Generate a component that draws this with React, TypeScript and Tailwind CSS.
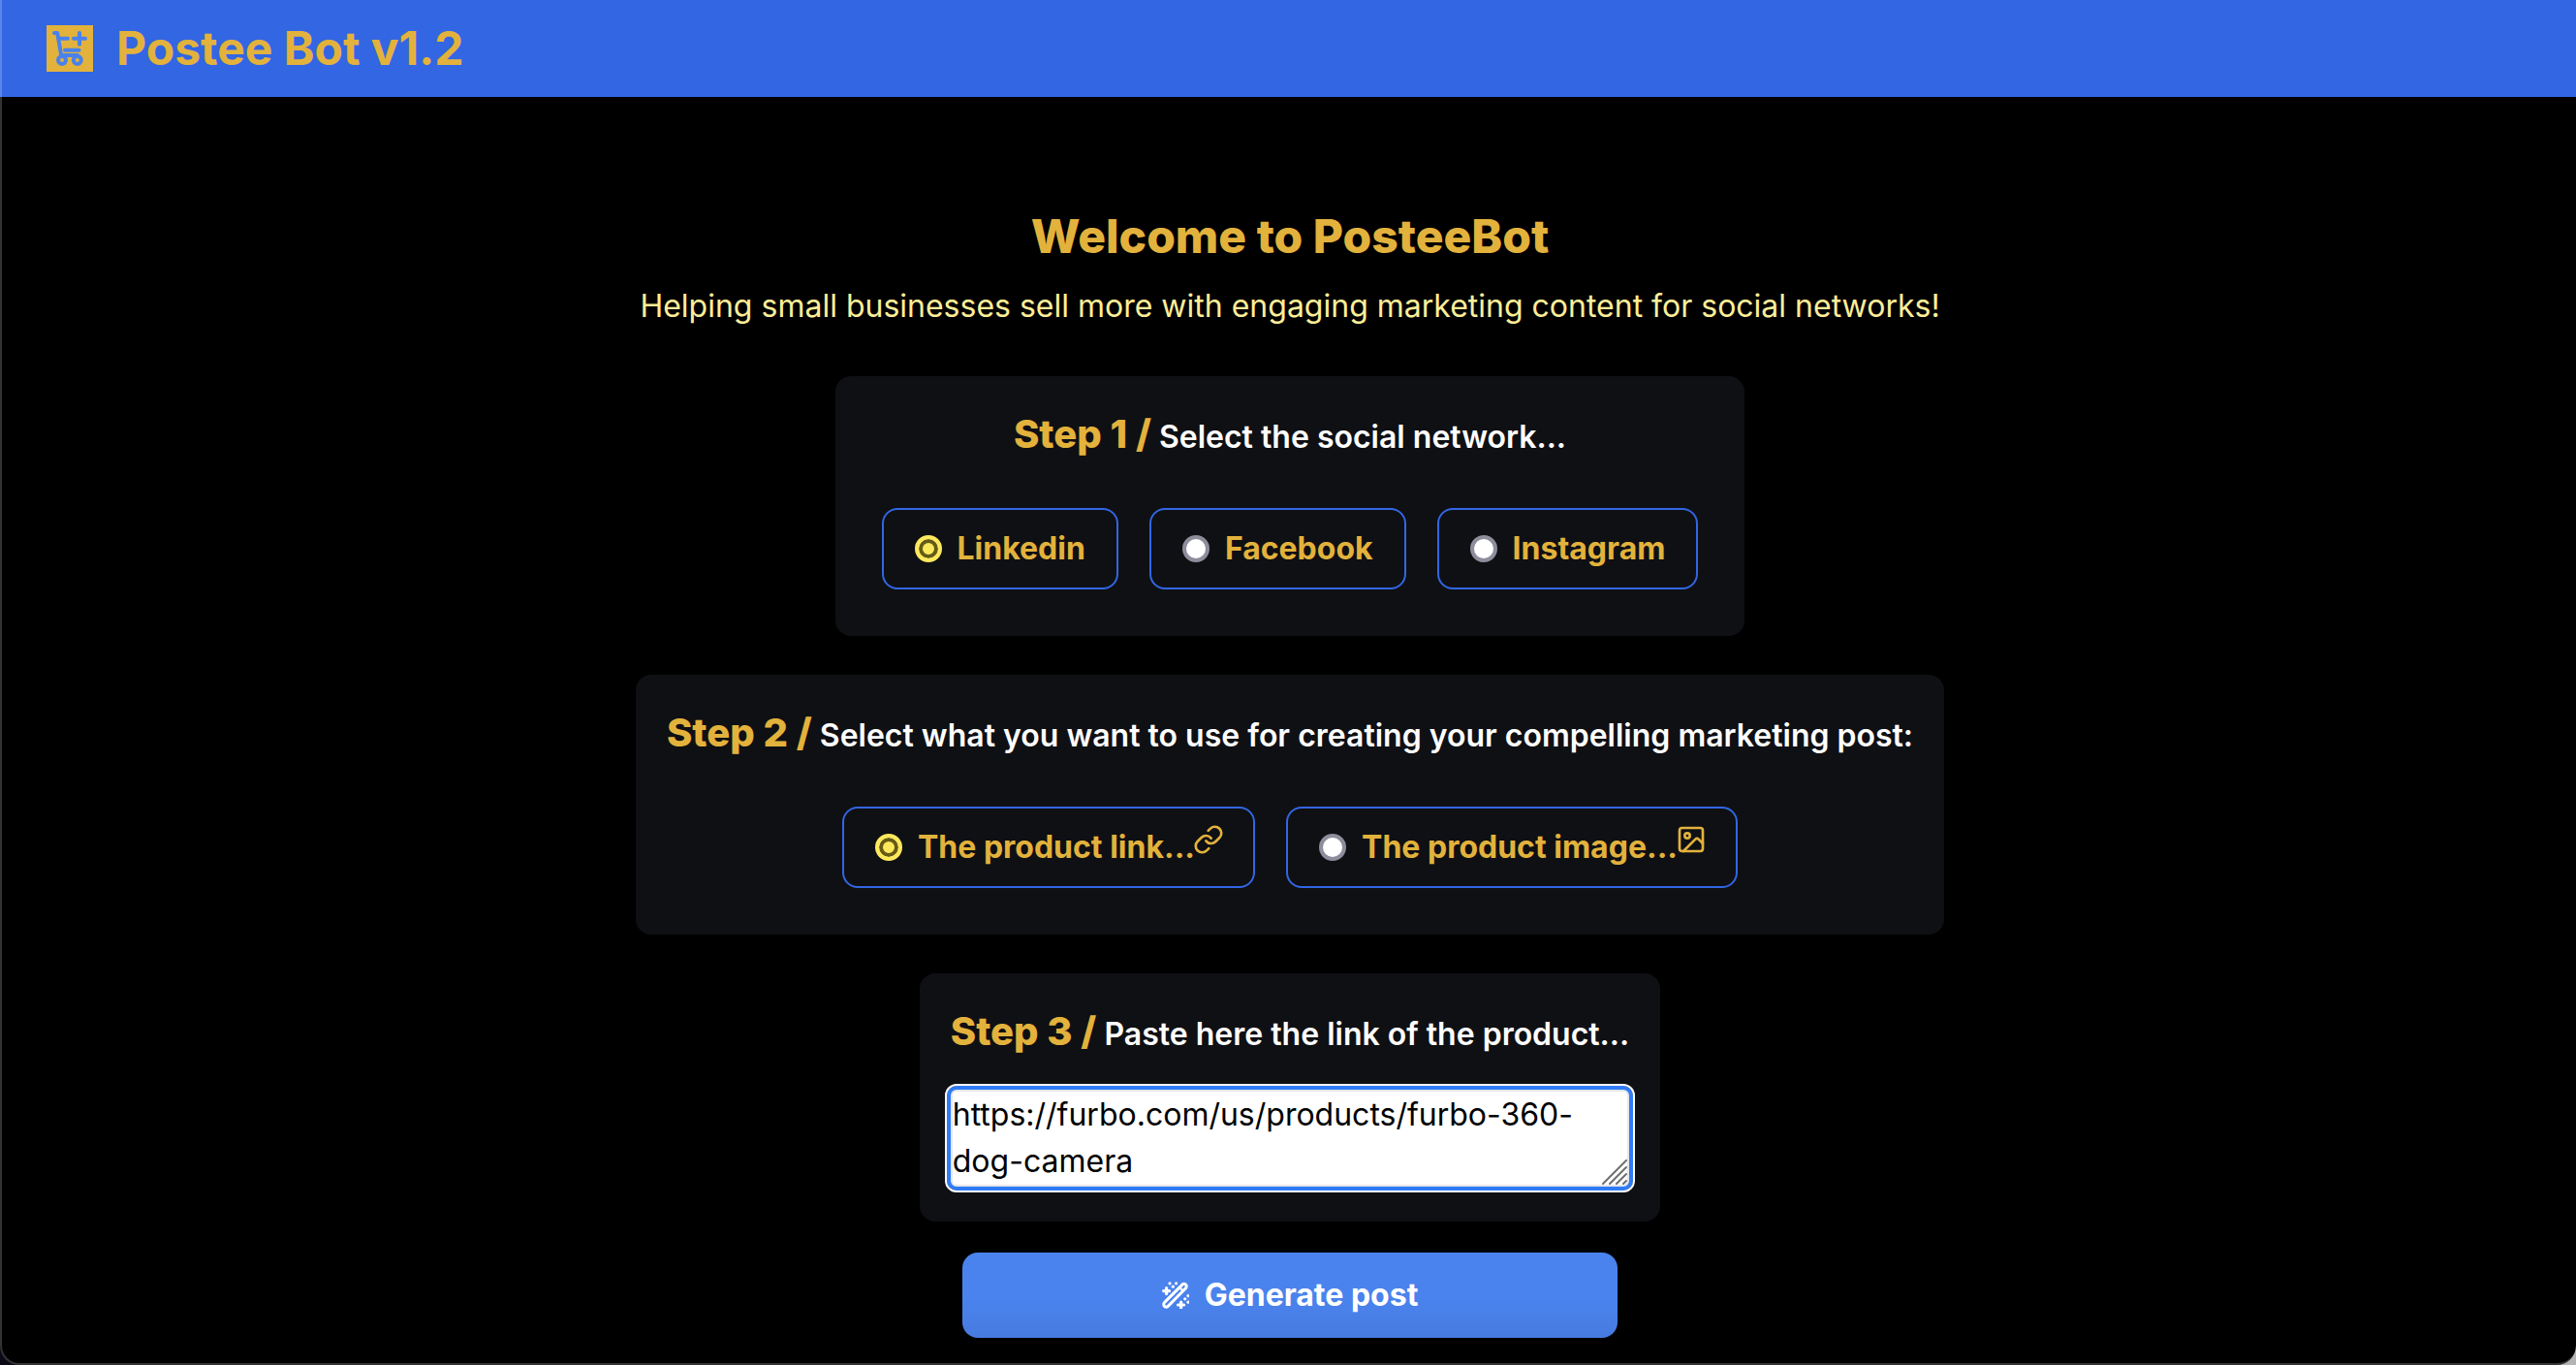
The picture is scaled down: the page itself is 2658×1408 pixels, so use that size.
import { useState } from "react";
import type { ReactNode } from "react";
import { Image, Link } from "lucide-react";

function CartPlusLogo() {
  return (
    <svg viewBox="0 0 48 48" className="size-12 shrink-0 bg-[#e2b23c]" fill="none" stroke="#4a82ec" strokeWidth="4" strokeLinecap="round" strokeLinejoin="round" aria-hidden="true">
      <path d="M8 8h3.2L15.2 31H32" />
      <path d="M12.5 13.7h9.3" />
      <path d="M19 25.7h14.5" />
      <path d="M34 8v11.8M28 13.7h12" />
      <circle cx="16" cy="36" r="4" />
      <circle cx="31.8" cy="36" r="4" />
    </svg>
  );
}

function WandIcon() {
  return (
    <svg viewBox="0 0 28 28" className="size-7 shrink-0" fill="none" stroke="currentColor" aria-hidden="true">
      <path d="M2.6 21.4 20.9 3.1a2.5 2.5 0 0 1 3.6 0 2.5 2.5 0 0 1 0 3.6L6.2 25.4a2.5 2.5 0 0 1-3.6 0 2.8 2.8 0 0 1 0-4Z" strokeWidth="3" />
      <path d="m18.3 6.2 3.6 3.6" strokeWidth="2.4" />
      <path d="M4.6 6.6v6M1.6 9.6h6M19.6 21v6M16.6 24h6" strokeWidth="3.2" strokeLinecap="round" />
      <g fill="currentColor" stroke="none">
        <circle cx="8" cy="1.8" r="1.6" />
        <circle cx="14.6" cy="1.8" r="1.6" />
        <circle cx="11.3" cy="5.2" r="1.6" />
        <circle cx="27" cy="14.6" r="1.6" />
        <circle cx="23.8" cy="17.8" r="1.6" />
        <circle cx="27" cy="21.2" r="1.6" />
      </g>
    </svg>
  );
}

function ResizeGrip() {
  return (
    <svg viewBox="0 0 28 28" className="pointer-events-none absolute right-0 bottom-0 size-7" stroke="#6f6f6f" strokeWidth="2" strokeLinecap="round" aria-hidden="true">
      <path d="M1 25 25 1M8 25 25 8M15 25 25 15M22 25l3-3" />
    </svg>
  );
}

function StepTitle({ step, children }: { step: string; children: ReactNode }) {
  return (
    <h2 className="text-[32px] leading-12 font-semibold text-white">
      <span className="text-[40px] leading-14 font-extrabold text-[#e2b23c]">{step} /</span> {children}
    </h2>
  );
}

type OptionProps = {
  name: string;
  value: string;
  label: string;
  icon?: ReactNode;
  selected: string;
  onSelect: (value: string) => void;
};

function Option({ name, value, label, icon, selected, onSelect }: OptionProps) {
  return (
    <label className="flex cursor-pointer items-center gap-4 rounded-2xl border-2 border-[#3266e3] px-8 py-4 text-[32px] leading-12 font-bold text-[#e2b23c]">
      <input
        type="radio"
        name={name}
        value={value}
        checked={selected === value}
        onChange={() => onSelect(value)}
        className="size-7 appearance-none rounded-full border-4 border-[#8e8d9b] bg-white checked:border-[#fde95c] checked:bg-[#fde95c] checked:shadow-[inset_0_0_0_4px_#655a17]"
      />
      <span className="flex items-center">
        {label}
        {icon}
      </span>
    </label>
  );
}

const networks = ["Linkedin", "Facebook", "Instagram"];

export default function App() {
  const [network, setNetwork] = useState("Linkedin");
  const [source, setSource] = useState("link");
  const [url, setUrl] = useState("https://furbo.com/us/products/furbo-360-dog-camera");

  return (
    <div className="relative min-h-screen bg-linear-to-r from-[#0a0a16] to-[#b4b4b4] font-[Inter,sans-serif]">
      <div className="flex min-h-screen flex-col overflow-hidden rounded-b-[20px] bg-black">
        <header className="flex items-center gap-6 bg-[#3266e3] px-12 py-3.5">
          <CartPlusLogo />
          <span className="text-5xl leading-18 font-bold text-[#e2b23c]">Postee Bot v1.2</span>
        </header>

        <main className="flex flex-col items-center pt-27 pb-7 pl-1">
          <h1 className="text-5xl leading-18 font-extrabold text-[#e2b23c]">Welcome to PosteeBot</h1>
          <p className="mt-3 text-[32px] leading-12 text-[#fdee98]">
            Helping small businesses sell more with engaging marketing content for social networks!
          </p>

          <form className="mt-12 flex flex-col items-center" onSubmit={(e) => e.preventDefault()}>
            <section className="flex flex-col items-center rounded-2xl bg-[#0f1014] p-8">
              <StepTitle step="Step 1">Select the social network...</StepTitle>
              <div className="mt-8 flex gap-8 p-4">
                {networks.map((n) => (
                  <Option key={n} name="network" value={n} label={n} selected={network} onSelect={setNetwork} />
                ))}
              </div>
            </section>

            <section className="mt-10 flex flex-col items-center rounded-2xl bg-[#0f1014] p-8">
              <StepTitle step="Step 2">Select what you want to use for creating your compelling marketing post:</StepTitle>
              <div className="mt-8 flex gap-8 p-4">
                <Option name="source" value="link" label="The product link..." icon={<Link className="-mx-0.5 mb-4 size-8" strokeWidth={2} />} selected={source} onSelect={setSource} />
                <Option name="source" value="image" label="The product image..." icon={<Image className="-mx-0.5 mb-4 size-8" strokeWidth={2} />} selected={source} onSelect={setSource} />
              </div>
            </section>

            <section className="mt-10 flex flex-col rounded-2xl bg-[#0f1014] px-8 pt-8 pb-9">
              <label htmlFor="product-link">
                <StepTitle step="Step 3">Paste here the link of the product...</StepTitle>
              </label>
              <div className="relative mt-8 flex">
                <textarea
                  id="product-link"
                  rows={2}
                  value={url}
                  onChange={(e) => setUrl(e.target.value)}
                  className="w-full resize-none overflow-hidden rounded-md border-2 border-[#e5e7e8] bg-white text-[32px] leading-12 text-black ring-4 ring-[#2f7cf6] outline-2 outline-offset-4 outline-white"
                />
                <ResizeGrip />
              </div>
            </section>

            <button
              type="submit"
              className="mt-8 flex w-169 items-center justify-center gap-4 rounded-2xl bg-linear-to-b from-[#4a83ee] from-50% to-[#477be0] py-5 text-[32px] leading-12 font-bold text-white"
            >
              <WandIcon />
              Generate post
            </button>
          </form>
        </main>
      </div>
      <div className="pointer-events-none absolute inset-0 rounded-b-[20px] border-b-2 border-l-2 border-white/20" />
    </div>
  );
}
